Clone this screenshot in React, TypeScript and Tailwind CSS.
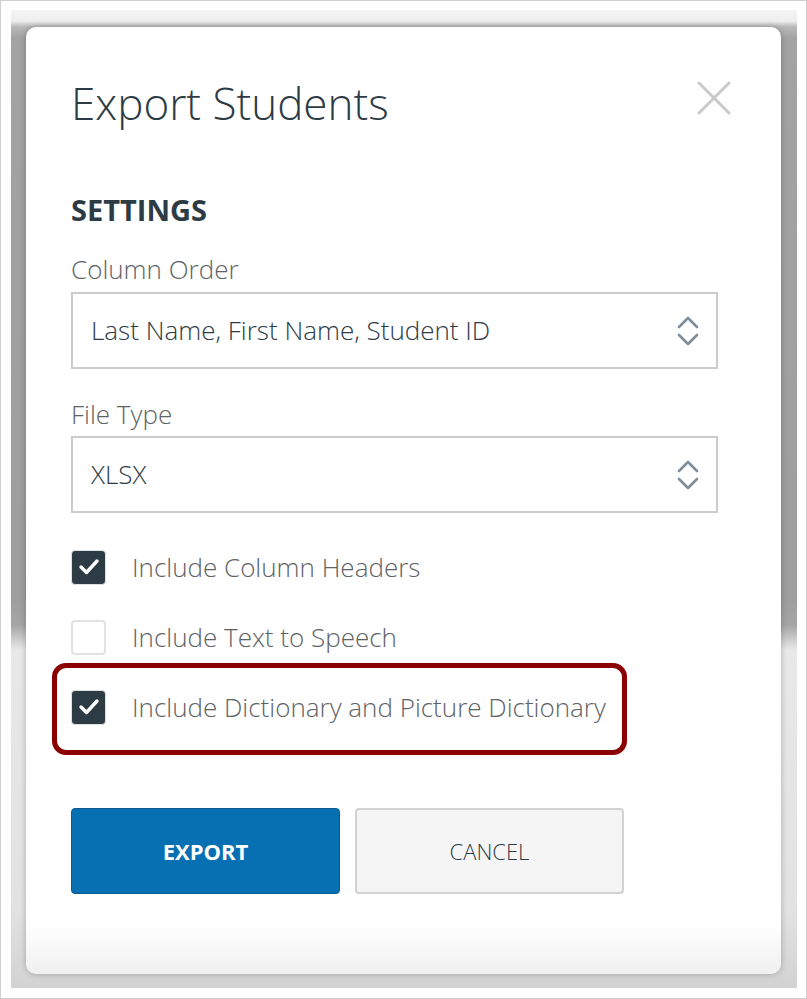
import React from "react";

const Chevrons = () => (
  <svg width="22" height="34" viewBox="0 0 22 34" fill="none" stroke="#7e8d99" strokeWidth="2.6" strokeLinecap="round" strokeLinejoin="round">
    <path d="M2 13 L11 4 L20 13" />
    <path d="M2 21 L11 30 L20 21" />
  </svg>
);

const Check = () => (
  <svg width="22" height="18" viewBox="0 0 22 18" fill="none" stroke="#ffffff" strokeWidth="3.4" strokeLinecap="round" strokeLinejoin="round">
    <path d="M3 9 L8.5 14.5 L19 3" />
  </svg>
);

type SelectProps = { value: string };

const FakeSelect: React.FC<SelectProps> = ({ value }) => (
  <div className="flex items-center justify-between h-[77px] border-2 border-[#cccccc] pl-[18px] pr-[17px] bg-white">
    <span className="text-[26px] font-light text-[#2d3b45]">{value}</span>
    <Chevrons />
  </div>
);

type CheckRowProps = { label: string; checked: boolean; highlight?: boolean };

const CheckRow: React.FC<CheckRowProps> = ({ label, checked, highlight }) => (
  <div className="relative flex items-center h-[70px]">
    {checked ? (
      <div className="w-[35px] h-[35px] rounded-[4px] bg-[#2d3b45] border border-[#e0e0e0] flex items-center justify-center">
        <Check />
      </div>
    ) : (
      <div className="w-[35px] h-[35px] rounded-[4px] bg-white border-2 border-[#e2e2e2]" />
    )}
    <span className="ml-[26px] text-[26px] font-light text-[#5e6366]">{label}</span>
    {highlight && (
      <div className="absolute left-[-19px] top-[-9px] w-[575px] h-[92px] rounded-[14px] border-[5px] border-[#8b0000] pointer-events-none" />
    )}
  </div>
);

export default function App() {
  return (
    <div
      className="w-[807px] h-[999px] bg-white border border-[#cfcfcf] pt-[9px] pl-[10px] pr-[9px] pb-[10px]"
      style={{ fontFamily: '"Open Sans", "Liberation Sans", sans-serif' }}
    >
      <div className="h-full pt-[17px] pl-[15px] pr-[16px] pb-[14px] bg-[linear-gradient(to_bottom,#f4f4f4_0px,#eeeeee_11px,#b8b8b8_17px,#a3a3a3_28px,#9e9e9e_590px,#a6a6a6_615px,#e8e8e8_640px,#e2e2e2_900px,#d2d2d2_100%)]">
        <div className="h-full rounded-[10px] shadow-[0_0_6px_rgba(0,0,0,0.25)] bg-[linear-gradient(to_bottom,#ffffff_0px,#ffffff_calc(100%-50px),#f0f0f0_100%)] pl-[45px] pr-[63px] pt-[48px]">
          <div className="flex items-start justify-between">
            <h1 className="text-[44px] leading-[56px] font-light text-[#2d3b45]">Export Students</h1>
            <svg className="mt-[6px] -mr-[13px]" width="34" height="34" viewBox="0 0 34 34" stroke="#c9c9c9" strokeWidth="3" strokeLinecap="round">
              <path d="M2 2 L32 32 M32 2 L2 32" />
            </svg>
          </div>

          <h2 className="mt-[61px] text-[29px] leading-[36px] font-bold text-[#2d3b45]">SETTINGS</h2>

          <div className="mt-[26px] text-[26px] leading-[30px] font-light text-[#5e6366]">Column Order</div>
          <div className="mt-[8px]">
            <FakeSelect value="Last Name, First Name, Student ID" />
          </div>

          <div className="mt-[30px] text-[26px] leading-[30px] font-light text-[#5e6366]">File Type</div>
          <div className="mt-[7px]">
            <FakeSelect value="XLSX" />
          </div>

          <div className="mt-[19px] flex flex-col">
            <CheckRow label="Include Column Headers" checked />
            <CheckRow label="Include Text to Speech" checked={false} />
            <CheckRow label="Include Dictionary and Picture Dictionary" checked highlight />
          </div>

          <div className="mt-[66px] flex gap-[15px]">
            <button className="w-[269px] h-[86px] rounded-[4px] bg-[#0770b3] border border-[#0a5a8f] text-white text-[22px] font-bold">
              EXPORT
            </button>
            <button className="w-[269px] h-[86px] rounded-[4px] bg-[#f5f5f5] border-2 border-[#d2d2d2] text-[#2d3b45] text-[22px] font-light">
              CANCEL
            </button>
          </div>
        </div>
      </div>
    </div>
  );
}
